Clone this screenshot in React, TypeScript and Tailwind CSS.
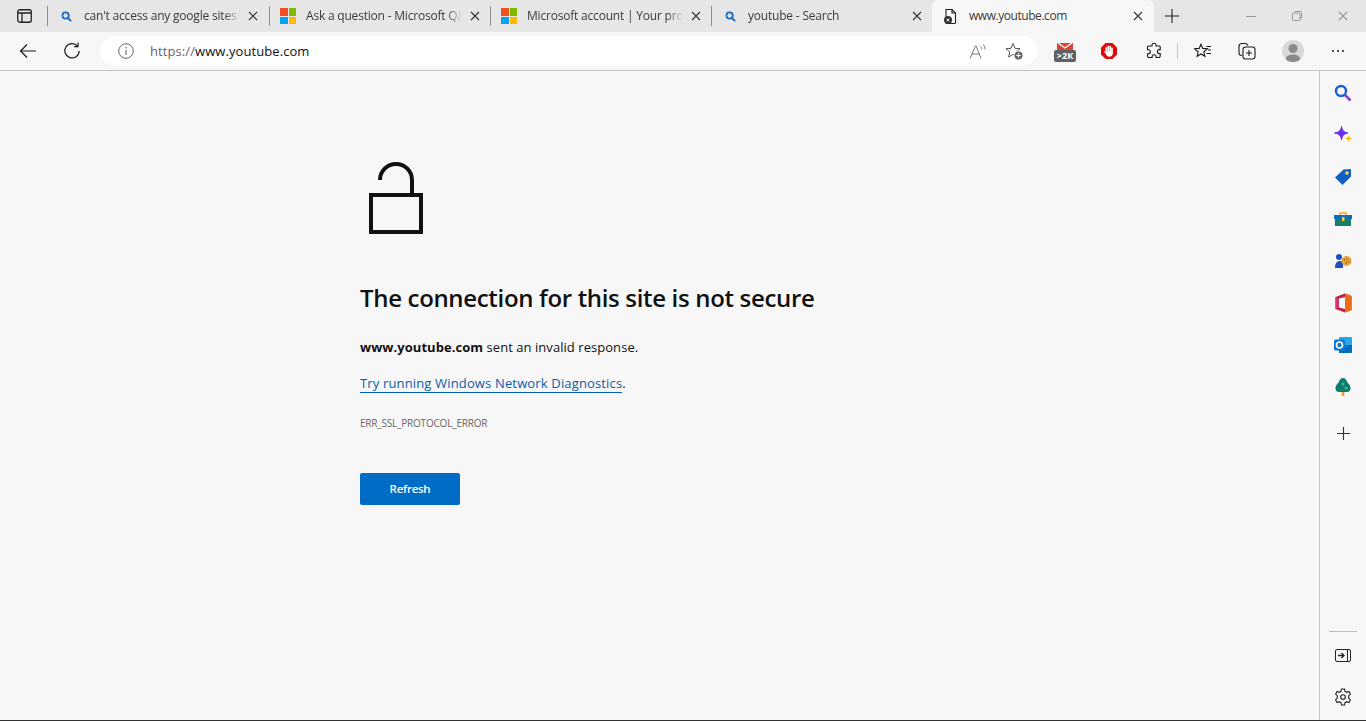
const font = { fontFamily: '"Open Sans", "Noto Sans", sans-serif' };

const SearchIcon = () => (
  <svg width="11" height="11" viewBox="0 0 12 12" fill="none" className="shrink-0">
    <circle cx="5" cy="5" r="3.4" stroke="#0f6cbd" strokeWidth="1.9" />
    <path d="M7.6 7.6 11 11" stroke="#0f6cbd" strokeWidth="2.1" />
  </svg>
);

const MsLogo = () => (
  <div className="grid grid-cols-2 gap-px w-[16px] h-[16px] shrink-0">
    <div className="bg-[#f25022]" />
    <div className="bg-[#7fba00]" />
    <div className="bg-[#00a4ef]" />
    <div className="bg-[#ffb900]" />
  </div>
);

const CloseIcon = ({ color = "#333" }: { color?: string }) => (
  <svg width="10" height="10" viewBox="0 0 10 10" fill="none" className="shrink-0">
    <path d="M1 1l8 8M9 1l-8 8" stroke={color} strokeWidth="1.1" />
  </svg>
);

const Sep = () => <div className="w-px h-[20px] bg-[#8c8c8c] shrink-0" />;

const Tab = ({ icon, title, cls, iconCls }: { icon: React.ReactNode; title: string; cls: string; iconCls: string }) => (
  <div className={`flex items-center h-[32px] shrink-0 ${cls}`}>
    <div className={`flex items-center shrink-0 ${iconCls}`}>{icon}</div>
    <div className="flex-1 min-w-0 overflow-hidden whitespace-nowrap text-[12px] tracking-[-0.2px] text-[#3b3b3b] [mask-image:linear-gradient(to_right,black_90%,transparent)]">
      {title}
    </div>
    <div className="ml-[8px]">
      <CloseIcon />
    </div>
  </div>
);

const ToolButton = ({ w, children }: { w: string; children: React.ReactNode }) => (
  <div className={`flex items-center justify-center shrink-0 ${w}`}>{children}</div>
);

const SideIcon = ({ mb, children }: { mb: string; children: React.ReactNode }) => (
  <div className={`flex items-center justify-center w-[46px] h-[20px] ${mb}`}>{children}</div>
);

export default function App() {
  return (
    <div className="flex flex-col h-[721px] w-[1366px] overflow-hidden bg-[#f7f7f7] text-[#111]" style={font}>
      {/* tab strip */}
      <div className="flex items-center h-[32px] bg-[#e6e6e6] shrink-0">
        <div className="flex items-center w-[47px] pl-[17px] shrink-0">
          <svg width="15" height="14" viewBox="0 0 15 14" fill="none">
            <rect x="0.75" y="0.75" width="13.5" height="12.5" rx="2" stroke="#222" strokeWidth="1.3" />
            <path d="M1 4h13M5 4v9" stroke="#222" strokeWidth="1.3" />
          </svg>
        </div>
        <Sep />
        <Tab
          icon={<SearchIcon />}
          title="can't access any google sites - Search"
          cls="w-[221px] pl-[13px] pr-[11px]"
          iconCls="w-[23px]"
        />
        <Sep />
        <Tab
          icon={<MsLogo />}
          title="Ask a question - Microsoft Q&A"
          cls="w-[220px] pl-[10px] pr-[10px]"
          iconCls="w-[26px]"
        />
        <Sep />
        <Tab
          icon={<MsLogo />}
          title="Microsoft account | Your profile"
          cls="w-[220px] pl-[10px] pr-[10px]"
          iconCls="w-[26px]"
        />
        <Sep />
        <Tab
          icon={<SearchIcon />}
          title="youtube - Search"
          cls="w-[220px] pl-[13px] pr-[10px]"
          iconCls="w-[23px]"
        />
        <div className="flex items-center w-[222px] h-[32px] pl-[11px] pr-[11px] bg-[#f7f7f7] rounded-t-[6px] self-end shrink-0">
          <svg width="15" height="17" viewBox="0 0 15 17" fill="none" className="shrink-0 mr-[11px]">
            <path d="M3 1.5h6l3.5 3.5v9.5a1 1 0 0 1-1 1H4a1 1 0 0 1-1-1z" stroke="#222" strokeWidth="1.1" />
            <path d="M9 1.5V5h3.5" stroke="#222" strokeWidth="1.1" />
            <circle cx="5" cy="12" r="4" fill="#333" />
            <path d="M3.6 10.6l2.8 2.8M6.4 10.6l-2.8 2.8" stroke="#fff" strokeWidth="0.9" />
          </svg>
          <div className="flex-1 text-[12px] tracking-[-0.45px] text-[#3b3b3b] whitespace-nowrap">www.youtube.com</div>
          <CloseIcon />
        </div>
        <div className="flex items-center justify-center w-[36px] shrink-0">
          <svg width="14" height="14" viewBox="0 0 14 14" fill="none">
            <path d="M7 0v14M0 7h14" stroke="#222" strokeWidth="1.1" />
          </svg>
        </div>
        <div className="flex-1" />
        <div className="flex items-center shrink-0">
          <div className="flex items-center justify-center w-[46px]">
            <div className="w-[10px] h-px bg-[#999]" />
          </div>
          <div className="flex items-center justify-center w-[46px]">
            <svg width="10" height="10" viewBox="0 0 10 10" fill="none">
              <rect x="0.5" y="2" width="7.5" height="7.5" rx="1" stroke="#999" />
              <path d="M2.5 2V1.5a1 1 0 0 1 1-1h5a1 1 0 0 1 1 1v5a1 1 0 0 1-1 1H8" stroke="#999" />
            </svg>
          </div>
          <div className="flex items-center justify-center w-[46px]">
            <CloseIcon color="#999" />
          </div>
        </div>
      </div>

      {/* toolbar */}
      <div className="flex items-center h-[39px] bg-[#f7f7f7] border-b border-[#c4c4c4] shrink-0">
        <ToolButton w="w-[56px]">
          <svg width="18" height="16" viewBox="0 0 18 16" fill="none">
            <path d="M17 8H1.5M8 1.5 1.5 8 8 14.5" stroke="#1a1a1a" strokeWidth="1.2" />
          </svg>
        </ToolButton>
        <ToolButton w="w-[32px]">
          <svg width="18" height="18" viewBox="0 0 18 18" fill="none">
            <path d="M14.6 4.2A7.2 7.2 0 1 0 16.2 9" stroke="#1a1a1a" strokeWidth="1.2" />
            <path d="M15 0.8v3.9h-3.9" stroke="#1a1a1a" strokeWidth="1.2" />
          </svg>
        </ToolButton>
        <div className="flex items-center w-[937px] h-[30px] ml-[12px] rounded-full bg-white pl-[18px] pr-[13px] shrink-0">
          <svg width="16" height="16" viewBox="0 0 16 16" fill="none" className="shrink-0 mr-[16px]">
            <circle cx="8" cy="8" r="7.3" stroke="#666" strokeWidth="1" />
            <path d="M8 7v5" stroke="#666" strokeWidth="1.1" />
            <circle cx="8" cy="4.8" r="0.8" fill="#666" />
          </svg>
          <div className="flex-1 mt-px text-[13px] tracking-[0.08px] whitespace-nowrap">
            <span className="text-[#666]">https://</span>
            <span className="text-[#111]">www.youtube.com</span>
          </div>
          <svg width="18" height="17" viewBox="0 0 18 17" fill="none" className="mr-[18px]">
            <path d="M1 15.5 6.5 3h.6L12 15.5M3 11h8" stroke="#777" strokeWidth="1" />
            <path d="M11.5 3.5c1 .7 1.4 1.600 1.2 3M14 1.500c1.800 1.300 2.400 3 2 5" stroke="#777" strokeWidth="1" />
          </svg>
          <svg width="19" height="19" viewBox="0 0 19 19" fill="none">
            <path d="M8 1.5 10 6.300l5.100.4-3.900 3.300 1.200 5L8 12.400 3.600 15l1.200-5L.9 6.700 6 6.300z" stroke="#555" strokeWidth="1" />
            <circle cx="13.5" cy="13.5" r="4.5" fill="#666" stroke="#fff" strokeWidth="0.8" />
            <path d="M13.5 11.200v4.600M11.200 13.500h4.600" stroke="#fff" strokeWidth="1" />
          </svg>
        </div>
        <ToolButton w="w-[56px]">
          <div className="flex flex-col items-center mt-[3px]">
            <svg width="16" height="7" viewBox="0 0 16 7" className="block">
              <rect width="16" height="7" fill="#db4437" />
              <path d="M1 0 8 5l7-5" fill="none" stroke="#fff" strokeWidth="1.2" />
            </svg>
            <div className="w-[22px] h-[12px] rounded-[2px] bg-[#5f6368] text-white text-[9px] leading-[12px] font-bold text-center">
              &gt;2K
            </div>
          </div>
        </ToolButton>
        <ToolButton w="w-[32px]">
          <svg width="18" height="18" viewBox="0 0 18 18">
            <path d="M5.5 1h7L17 5.500v7L12.500 17h-7L1 12.500v-7z" fill="#e20b0b" />
            <rect x="5.5" y="5" width="1.7" height="6" rx="0.8" fill="#fff" />
            <rect x="7.5" y="3.5" width="1.7" height="7" rx="0.8" fill="#fff" />
            <rect x="9.4" y="4" width="1.7" height="7" rx="0.8" fill="#fff" />
            <rect x="11.2" y="5.5" width="1.6" height="6" rx="0.8" fill="#fff" />
            <path d="M5.5 9.500h7.300V11c0 2.500-1.500 3.800-3.500 3.800-1.600 0-2.500-.8-3.200-2.200L4.300 10c-.3-.8.6-1.300 1.200-.5z" fill="#fff" />
          </svg>
        </ToolButton>
        <ToolButton w="w-[52px] pl-[6px]">
          <svg width="18" height="18" viewBox="0 0 18 18" fill="none">
            <path d="M7 3.200a2 2 0 0 1 4 0V4h3.200a1 1 0 0 1 1 1v2.600h-.8a2 2 0 0 0 0 4h.8V14a1.500 1.500 0 0 1-1.500 1.500h-2.600v-.8a2 2 0 0 0-4 0v.8H4A1.500 1.500 0 0 1 2.500 14v-2.300h.8a2 2 0 0 0 0-4h-.8V5a1 1 0 0 1 1-1H7z" stroke="#1a1a1a" strokeWidth="1.1" />
          </svg>
        </ToolButton>
        <div className="w-px h-[16px] bg-[#c8c8c8] shrink-0" />
        <ToolButton w="w-[49px]">
          <svg width="18" height="16" viewBox="0 0 18 16" fill="none">
            <path d="M7 1.200 8.800 5.400l4.600.4-3.500 3 1 4.500L7 11l-3.900 2.300 1-4.500-3.500-3 4.600-.4z" stroke="#1a1a1a" strokeWidth="1.1" />
            <path d="M12.500 3.500H17M14 7H17M12.500 10.500H17" stroke="#1a1a1a" strokeWidth="1.1" />
          </svg>
        </ToolButton>
        <ToolButton w="w-[39px]">
          <svg width="18" height="18" viewBox="0 0 18 18" fill="none">
            <path d="M4 13.500c-2 0-3-1-3-2.500V4.500C1 2.500 2.500 1.500 4 1.500h3c1.500 0 2.500 1 3 2" stroke="#1a1a1a" strokeWidth="1.1" />
            <rect x="5" y="5" width="12" height="12" rx="2.5" stroke="#1a1a1a" strokeWidth="1.1" />
            <path d="M11 8v6M8 11h6" stroke="#1a1a1a" strokeWidth="1.1" />
          </svg>
        </ToolButton>
        <ToolButton w="w-[53px]">
          <svg width="22" height="22" viewBox="0 0 22 22">
            <defs>
              <clipPath id="avatar">
                <circle cx="11" cy="11" r="11" />
              </clipPath>
            </defs>
            <circle cx="11" cy="11" r="11" fill="#d9d9d9" />
            <g clipPath="url(#avatar)" fill="#8a8a8a">
              <circle cx="11" cy="8.5" r="4.5" />
              <ellipse cx="11" cy="19.5" rx="7.5" ry="5" />
            </g>
          </svg>
        </ToolButton>
        <ToolButton w="w-[38px]">
          <div className="flex gap-[3px]">
            <div className="w-[2px] h-[2px] bg-[#1a1a1a] rounded-full" />
            <div className="w-[2px] h-[2px] bg-[#1a1a1a] rounded-full" />
            <div className="w-[2px] h-[2px] bg-[#1a1a1a] rounded-full" />
          </div>
        </ToolButton>
      </div>

      {/* body */}
      <div className="flex flex-1 min-h-0 border-b border-[#333]">
        <main className="flex-1 pl-[360px] pt-[91px]">
          <svg width="64" height="72" viewBox="0 0 64 72" fill="none" className="block">
            <path d="M20 18A16 16 0 0 1 52 18V33" stroke="#111" strokeWidth="4" />
            <rect x="11" y="33" width="50" height="37" stroke="#111" strokeWidth="4" />
          </svg>
          <h1 className="mt-[48px] text-[24px] leading-[32px] font-semibold tracking-[-0.33px] text-[#111] whitespace-nowrap">
            The connection for this site is not secure
          </h1>
          <p className="mt-[23px] text-[13px] leading-[20px] tracking-[0.05px] text-[#111] whitespace-nowrap">
            <strong className="font-bold">www.youtube.com</strong> sent an invalid response.
          </p>
          <p className="mt-[16px] text-[13px] leading-[20px] tracking-[0.15px] text-[#111] whitespace-nowrap">
            <a className="text-[#0a5ca8] border-b border-[#005fb8]">Try running Windows Network Diagnostics</a>.
          </p>
          <div className="mt-[23px] text-[10px] leading-[14px] tracking-[-0.2px] text-[#666] whitespace-nowrap">ERR_SSL_PROTOCOL_ERROR</div>
          <button className="block mt-[43px] w-[100px] h-[32px] rounded-[2px] bg-[#006cc6] text-white text-[11.5px] tracking-[-0.25px] font-semibold">
            Refresh
          </button>
        </main>

        {/* sidebar */}
        <aside className="flex flex-col items-center w-[47px] border-l border-[#c4c4c4] shrink-0 pt-[12px] pb-[13px]">
          <SideIcon mb="mb-[22px]">
            <svg width="18" height="18" viewBox="0 0 18 18" fill="none">
              <circle cx="7" cy="7" r="5" stroke="#1b5fd6" strokeWidth="2.4" />
              <path d="M11 11l5.500 5.500" stroke="#8a3fe0" strokeWidth="2.6" />
            </svg>
          </SideIcon>
          <SideIcon mb="mb-[22px]">
            <svg width="20" height="20" viewBox="0 0 20 20">
              <path d="M8.500 1.500c.6 3.800 2 5.600 6.500 6.500-4.500 1-5.900 2.700-6.500 7-.6-4.300-2-6-7-7 5-.9 6.400-2.700 7-6.500z" fill="#6a2ff0" stroke="#6a2ff0" strokeWidth="1" />
              <path d="M15.500 10.500c.2 2 .9 2.800 3 3-2.100.2-2.800 1-3 3-.2-2-.9-2.800-3-3 2.100-.2 2.800-1 3-3z" fill="#ffb900" stroke="#ffb900" strokeWidth="0.6" />
            </svg>
          </SideIcon>
          <SideIcon mb="mb-[22px]">
            <svg width="18" height="18" viewBox="0 0 18 18">
              <path d="M1 9.500 9.500 1.500 17 1v7.500L8.500 17z" fill="#0f5fc4" />
              <circle cx="13" cy="5" r="1.8" fill="#ffd24d" />
            </svg>
          </SideIcon>
          <SideIcon mb="mb-[22px]">
            <svg width="18" height="16" viewBox="0 0 18 16">
              <path d="M6 4V2h6v2" fill="none" stroke="#f0a92e" strokeWidth="1.5" />
              <rect x="0" y="4" width="18" height="4" fill="#0f6fb5" />
              <rect x="1" y="8" width="16" height="7" fill="#12806a" />
              <rect x="8" y="6" width="2.5" height="4" fill="#ffc83d" />
            </svg>
          </SideIcon>
          <SideIcon mb="mb-[22px]">
            <svg width="18" height="16" viewBox="0 0 18 16">
              <circle cx="5" cy="4" r="3" fill="#1d4fc0" />
              <path d="M1 15c0-5 2-7 5-7 2 0 3 1 3 3v4z" fill="#1d4fc0" />
              <circle cx="12.5" cy="8" r="5" fill="#e8a33d" />
              <circle cx="10.5" cy="7" r="0.8" fill="#8a5a1a" />
              <circle cx="13" cy="6" r="0.8" fill="#8a5a1a" />
              <circle cx="14.5" cy="9" r="0.8" fill="#8a5a1a" />
              <circle cx="12" cy="10" r="0.8" fill="#8a5a1a" />
            </svg>
          </SideIcon>
          <SideIcon mb="mb-[22px]">
            <svg width="17" height="20" viewBox="0 0 17 20">
              <path d="M0.5 4 10 0.500l6.500 2.500v14L10 19.500 0.500 16z" fill="#c41e3a" />
              <path d="M10 0.500l6.500 2.500v14L10 19.500z" fill="#eb6c14" />
              <path d="M4 5.500 10 4v12l-6-1.500z" fill="#f7f7f7" />
              <path d="M0.500 4 4 5.500v9L0.500 16z" fill="#d6346f" />
            </svg>
          </SideIcon>
          <SideIcon mb="mb-[22px]">
            <svg width="18" height="18" viewBox="0 0 18 18">
              <rect x="5" y="1" width="13" height="16" rx="1" fill="#28a8ea" />
              <path d="M5 9h13v7a1 1 0 0 1-1 1H5z" fill="#0a6cbd" />
              <rect x="0" y="3.5" width="11" height="11" rx="1.5" fill="#0f78d4" />
              <circle cx="5.5" cy="9" r="3" fill="none" stroke="#fff" strokeWidth="1.6" />
            </svg>
          </SideIcon>
          <SideIcon mb="mb-[26px]">
            <svg width="16" height="18" viewBox="0 0 16 18">
              <rect x="6.8" y="13" width="2.5" height="5" fill="#eb9a1d" />
              <path d="M8 0c2.200 0 3.500 2 4.200 4.200C14.300 6 16 8.500 15.500 11c-.3 1.800-1.500 3-3.500 3H4c-2 0-3.200-1.200-3.500-3C0 8.500 1.700 6 3.800 4.200 4.500 2 5.800 0 8 0z" fill="#0b7d6b" />
              <circle cx="8" cy="6" r="1.5" fill="#4db3a0" />
              <circle cx="11" cy="10" r="1.5" fill="#4db3a0" />
            </svg>
          </SideIcon>
          <SideIcon mb="mb-0">
            <svg width="13" height="13" viewBox="0 0 13 13" fill="none">
              <path d="M6.500 0v13M0 6.500h13" stroke="#333" strokeWidth="1.1" />
            </svg>
          </SideIcon>
          <div className="flex-1" />
          <div className="w-[28px] h-px bg-[#bdbdbd] mb-[13px]" />
          <SideIcon mb="mb-[22px]">
            <svg width="16" height="13" viewBox="0 0 16 13" fill="none">
              <rect x="0.5" y="0.5" width="15" height="12" rx="1.5" stroke="#222" />
              <path d="M12.500 0.500v12" stroke="#222" />
              <path d="M3 6.500h6M6.500 4l2.500 2.500-2.500 2.500" stroke="#222" strokeWidth="1.3" />
            </svg>
          </SideIcon>
          <SideIcon mb="mb-0">
            <svg width="18" height="18" viewBox="0 0 18 18" fill="none">
              <path d="M7.500 1h3l.5 2.300 1.700 1 2.200-.8 1.500 2.600-1.700 1.600v2.600l1.700 1.600-1.500 2.600-2.200-.8-1.700 1-.5 2.300h-3l-.5-2.300-1.700-1-2.200.8-1.500-2.600 1.700-1.600V7.700L1.600 6.100l1.500-2.600 2.200.8 1.700-1z" stroke="#222" strokeWidth="1.1" />
              <circle cx="9" cy="9" r="2.3" stroke="#222" strokeWidth="1.1" />
            </svg>
          </SideIcon>
        </aside>
      </div>
    </div>
  );
}
